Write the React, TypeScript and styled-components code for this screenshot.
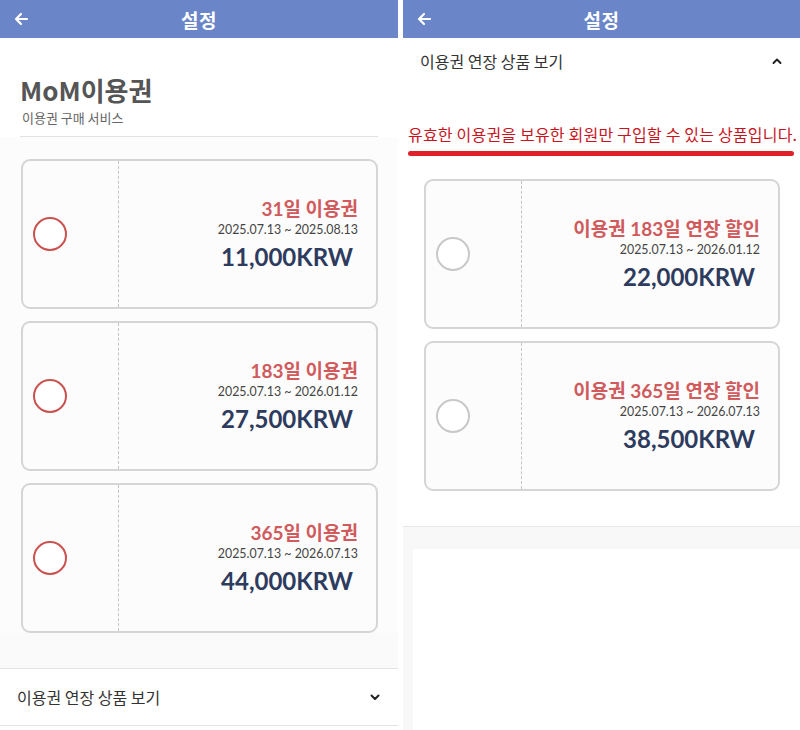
import React from "react";
import styled, { createGlobalStyle } from "styled-components";

const GlobalStyle = createGlobalStyle`
  html, body { margin: 0; padding: 0; background: #ffffff; }
  body { font-family: "Noto Sans CJK KR", "Noto Sans", sans-serif; }
  * { box-sizing: border-box; }
`;

const Screen = styled.div`
  display: flex;
  gap: 5px;
  width: 800px;
  height: 730px;
  overflow: hidden;
  background: #ffffff;
`;

const Panel = styled.div<{ $w: number }>`
  width: ${(p) => p.$w}px;
  height: 730px;
  display: flex;
  flex-direction: column;
  background: #fcfcfc;
`;

const Header = styled.div`
  height: 38px;
  flex: none;
  background: #6a86c9;
  display: flex;
  align-items: center;
  position: relative;
  justify-content: center;
`;

const BackBtn = styled.div`
  position: absolute;
  left: 13px;
  top: 11px;
  width: 16px;
  height: 16px;
  display: flex;
`;

const HeaderTitle = styled.div`
  color: #ffffff;
  font-size: 19px;
  font-weight: 700;
  letter-spacing: 0.5px;
`;

const Intro = styled.div`
  padding: 33px 20px 0 20px;
  background: #ffffff;
`;

const IntroTitle = styled.div`
  font-size: 26px;
  line-height: 38px;
  font-weight: 700;
  color: #555555;
`;

const IntroSub = styled.div`
  font-size: 13px;
  line-height: 17px;
  color: #666666;
  padding-left: 2px;
  padding-bottom: 10px;
  border-bottom: 1px solid #e2e2e2;
`;

const CardList = styled.div<{ $top: number; $bottom: number }>`
  display: flex;
  flex-direction: column;
  gap: 12px;
  padding: ${(p) => p.$top}px 20px ${(p) => p.$bottom}px 21px;
`;

const Card = styled.div`
  height: 150px;
  display: flex;
  border: 2px solid #d5d5d5;
  border-radius: 9px;
  background: #fcfcfc;
`;

const Stub = styled.div`
  width: 96px;
  flex: none;
  border-right: 1px dashed #c4c4c4;
  display: flex;
  align-items: center;
  padding-left: 10px;
`;

const Radio = styled.div<{ $red: boolean }>`
  width: 34px;
  height: 34px;
  border-radius: 50%;
  border: 2px solid ${(p) => (p.$red ? "#c9524f" : "#c8c8c8")};
  background: #ffffff;
`;

const Info = styled.div`
  flex: 1;
  display: flex;
  flex-direction: column;
  align-items: flex-end;
  justify-content: center;
  padding-right: 18px;
`;

const PlanTitle = styled.div`
  font-family: Lato, "Noto Sans CJK KR", sans-serif;
  font-size: 19px;
  line-height: 24px;
  font-weight: 700;
  color: #d05a5c;
`;

const PlanDate = styled.div`
  font-family: Lato, "Noto Sans", sans-serif;
  font-size: 12.4px;
  line-height: 18px;
  color: #444444;
`;

const PlanPrice = styled.div`
  font-family: Lato, "Noto Sans", sans-serif;
  font-size: 24px;
  line-height: 30px;
  font-weight: 700;
  color: #2d3b5e;
  margin-top: 3px;
  padding-right: 5px;
`;

const Expander = styled.div<{ $top: boolean }>`
  height: ${(p) => (p.$top ? 46 : 58)}px;
  flex: none;
  display: flex;
  align-items: center;
  justify-content: space-between;
  padding: 0 18px 0 17px;
  background: #ffffff;
  border-top: ${(p) => (p.$top ? "none" : "1px solid #e4e4e4")};
  border-bottom: ${(p) => (p.$top ? "none" : "1px solid #e4e4e4")};
  font-size: 16px;
  color: #333333;
`;

const Notice = styled.div`
  padding: 39px 6px 0 5px;
  background: #ffffff;
`;

const NoticeText = styled.div`
  font-size: 16px;
  line-height: 22px;
  color: #c8141e;
  letter-spacing: 0.2px;
  white-space: nowrap;
`;

const Underline = styled.div`
  height: 5px;
  margin: 6px 0 0 0;
  border-radius: 3px;
  background: #e0212a;
`;

const RightBody = styled.div`
  background: #ffffff;
  flex: none;
`;

const Spacer = styled.div<{ $h?: number; $bg: string }>`
  flex: ${(p) => (p.$h ? `0 0 ${p.$h}px` : "1")};
  background: ${(p) => p.$bg};
`;

const Footer = styled.div`
  flex: 1;
  display: flex;
  padding: 22px 0 0 10px;
  background: #f8f8f8;
  border-top: 1px solid #e8e8e8;
`;

const FooterInner = styled.div`
  flex: 1;
  background: #ffffff;
`;

const Arrow = () => (
  <svg width="16" height="16" viewBox="0 0 16 16">
    <path d="M14 8H3M8 3L3 8l5 5" fill="none" stroke="#fff" strokeWidth="2.2" strokeLinecap="round" strokeLinejoin="round" />
  </svg>
);

const Chevron = ({ up }: { up?: boolean }) => (
  <svg width="10" height="8" viewBox="0 0 10 8">
    <path
      d={up ? "M1.5 6L5 2.5 8.5 6" : "M1.5 2.5L5 6 8.5 2.5"}
      fill="none"
      stroke="#222"
      strokeWidth="2"
      strokeLinecap="round"
      strokeLinejoin="round"
    />
  </svg>
);

type Plan = { title: string; date: string; price: string };

const basePlans: Plan[] = [
  { title: "31일 이용권", date: "2025.07.13 ~ 2025.08.13", price: "11,000KRW" },
  { title: "183일 이용권", date: "2025.07.13 ~ 2026.01.12", price: "27,500KRW" },
  { title: "365일 이용권", date: "2025.07.13 ~ 2026.07.13", price: "44,000KRW" },
];

const extPlans: Plan[] = [
  { title: "이용권 183일 연장 할인", date: "2025.07.13 ~ 2026.01.12", price: "22,000KRW" },
  { title: "이용권 365일 연장 할인", date: "2025.07.13 ~ 2026.07.13", price: "38,500KRW" },
];

const PlanCard = ({ plan, red }: { plan: Plan; red: boolean }) => (
  <Card>
    <Stub>
      <Radio $red={red} />
    </Stub>
    <Info>
      <PlanTitle>{plan.title}</PlanTitle>
      <PlanDate>{plan.date}</PlanDate>
      <PlanPrice>{plan.price}</PlanPrice>
    </Info>
  </Card>
);

const TopBar = () => (
  <Header>
    <BackBtn>
      <Arrow />
    </BackBtn>
    <HeaderTitle>설정</HeaderTitle>
  </Header>
);

export default function App() {
  return (
    <>
      <GlobalStyle />
      <Screen>
        <Panel $w={398}>
          <TopBar />
          <Intro>
            <IntroTitle>MoM이용권</IntroTitle>
            <IntroSub>이용권 구매 서비스</IntroSub>
          </Intro>
          <CardList $top={22} $bottom={0}>
            {basePlans.map((p) => (
              <PlanCard key={p.title} plan={p} red />
            ))}
          </CardList>
          <Spacer $bg="#fafafa" />
          <Expander $top={false}>
            <span>이용권 연장 상품 보기</span>
            <Chevron />
          </Expander>
          <Spacer $h={4} $bg="#ffffff" />
        </Panel>
        <Panel $w={397}>
          <TopBar />
          <RightBody>
            <Expander $top>
              <span>이용권 연장 상품 보기</span>
              <Chevron up />
            </Expander>
            <Notice>
              <NoticeText>유효한 이용권을 보유한 회원만 구입할 수 있는 상품입니다.</NoticeText>
              <Underline />
            </Notice>
            <CardList $top={23} $bottom={35}>
              {extPlans.map((p) => (
                <PlanCard key={p.title} plan={p} red={false} />
              ))}
            </CardList>
          </RightBody>
          <Footer>
            <FooterInner />
          </Footer>
        </Panel>
      </Screen>
    </>
  );
}
